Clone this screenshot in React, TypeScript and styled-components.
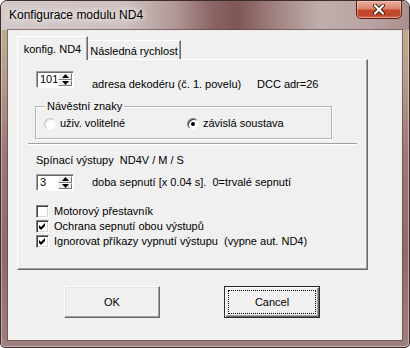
import styled, { createGlobalStyle } from 'styled-components';

const GlobalStyle = createGlobalStyle`
  body {
    margin: 0;
    background: #ffffff;
    font-family: "Liberation Sans", Arial, sans-serif;
    font-size: 11px;
    color: #000;
  }
`;

const Window = styled.div`
  width: 410px;
  height: 348px;
  box-sizing: border-box;
  display: flex;
  flex-direction: column;
  border: 1px solid #3c2c2c;
  border-radius: 7px 7px 5px 5px;
  overflow: hidden;
  background: linear-gradient(
    180deg,
    #c2b190 0px,
    #b8a48e 60px,
    #9d7a78 150px,
    #8e6a6a 250px,
    #a08080 348px
  );
  box-shadow: inset 0 0 0 1px rgba(255, 235, 235, 0.45);
`;

const TitleBar = styled.div`
  height: 29px;
  flex: none;
  display: flex;
  align-items: flex-start;
  padding-left: 8px;
  background: linear-gradient(
    90deg,
    #d3c9c8 0%,
    #cdc1c0 30%,
    #b39a99 42%,
    #8a6464 52%,
    #7e5656 58%,
    #9c7d7c 66%,
    #c0adac 78%,
    #b9a4a3 90%,
    #a98e8d 100%
  );
`;

const Title = styled.span`
  margin-top: 7px;
  font-size: 12px;
  line-height: 15px;
  text-shadow: 0 0 6px #fff, 0 0 10px rgba(255, 255, 255, 0.8);
`;

const CloseButton = styled.div`
  margin-left: auto;
  margin-right: 7px;
  margin-top: -1px;
  width: 46px;
  height: 19px;
  box-sizing: border-box;
  display: flex;
  align-items: center;
  justify-content: center;
  border: 1px solid #5a2016;
  border-radius: 0 0 5px 5px;
  background: linear-gradient(180deg, #eab0a2 0%, #d9846e 45%, #c5482a 55%, #c0482c 85%, #d9745a 100%);
  box-shadow: inset 0 0 0 1px rgba(255, 210, 200, 0.45);
`;

const Client = styled.div`
  flex: 1;
  margin: 0 7px 7px;
  background: #f0f0f0;
  display: flex;
  flex-direction: column;
  padding: 6px 0 0 9px;
  box-shadow: 0 0 0 1px rgba(90, 60, 60, 0.6);
`;

const TabRow = styled.div`
  display: flex;
  align-items: flex-end;
  height: 23px;
`;

const Tab = styled.div<{ $active?: boolean; $width: number }>`
  position: relative;
  z-index: 1;
  box-sizing: border-box;
  width: ${(p) => p.$width}px;
  height: ${(p) => (p.$active ? 24 : 19)}px;
  margin-bottom: ${(p) => (p.$active ? -1 : 0)}px;
  padding-top: ${(p) => (p.$active ? 6 : 4)}px;
  text-align: center;
  line-height: 13px;
  white-space: nowrap;
  background: #f0f0f0;
  border-top: 1px solid #fff;
  border-left: ${(p) => (p.$active ? '1px solid #fff' : 'none')};
  border-right: 1px solid #696969;
  box-shadow: inset -1px 0 0 #a0a0a0;
`;

const Panel = styled.div`
  width: 351px;
  height: 211px;
  box-sizing: border-box;
  border: 1px solid;
  border-color: #fff #696969 #696969 #fff;
  box-shadow: inset -1px -1px 0 #a0a0a0;
  display: flex;
  flex-direction: column;
`;

const Row = styled.div<{ $top: number }>`
  display: flex;
  align-items: flex-start;
  margin: ${(p) => p.$top}px 0 0 18px;
`;

const Spin = styled.div`
  width: 38px;
  height: 17px;
  box-sizing: border-box;
  display: flex;
  background: #fff;
  border: 1px solid;
  border-color: #a0a0a0 #fff #fff #a0a0a0;
  box-shadow: inset 1px 1px 0 #696969;
`;

const SpinValue = styled.span`
  flex: 1;
  padding: 1px 0 0 3px;
  line-height: 13px;
`;

const SpinButtons = styled.div`
  width: 14px;
  display: flex;
  flex-direction: column;
  margin: 1px 1px 1px 0;
`;

const SpinHalf = styled.div`
  flex: 1;
  display: flex;
  align-items: center;
  justify-content: center;
  background: #ececec;
  border: 1px solid;
  border-color: #fff #7a7a7a #7a7a7a #fff;
`;

const Label = styled.span<{ $offset: number; $gap: number; $width?: number }>`
  margin-top: ${(p) => p.$offset}px;
  margin-left: ${(p) => p.$gap}px;
  width: ${(p) => (p.$width ? `${p.$width}px` : 'auto')};
  line-height: 13px;
  white-space: pre;
`;

const GroupBox = styled.div`
  margin: 15px 0 0 17px;
  width: 297px;
  height: 33px;
  box-sizing: border-box;
  border: 1px solid #b4b4b4;
  box-shadow: 1px 1px 0 #fff, inset 1px 1px 0 #fff;
`;

const Legend = styled.span`
  display: block;
  width: fit-content;
  margin: -7px 0 0 9px;
  padding: 0 2px;
  background: #f0f0f0;
  line-height: 13px;
`;

const RadioRow = styled.div`
  display: flex;
  align-items: center;
  height: 13px;
  margin: 4px 0 0 8px;
`;

const RadioItem = styled.label<{ $width?: number }>`
  display: flex;
  align-items: center;
  width: ${(p) => (p.$width ? `${p.$width}px` : 'auto')};
  line-height: 13px;
`;

const RadioCircle = styled.span<{ $checked?: boolean }>`
  width: 12px;
  height: 12px;
  box-sizing: border-box;
  margin-right: 4px;
  border-radius: 50%;
  display: flex;
  align-items: center;
  justify-content: center;
  background: #fff;
  border: 1px solid;
  border-color: ${(p) => (p.$checked ? '#808080 #f4f4f4 #f4f4f4 #808080' : '#c4c4c4 #f8f8f8 #f8f8f8 #c4c4c4')};
  box-shadow: ${(p) => (p.$checked ? 'inset 1px 1px 0 #404040' : 'inset 1px 1px 0 #e0e0e0')};

  &::after {
    content: '';
    display: ${(p) => (p.$checked ? 'block' : 'none')};
    width: 4px;
    height: 4px;
    border-radius: 50%;
    background: #000;
  }
`;

const Separator = styled.div`
  margin: 4px 0 0 10px;
  width: 329px;
  height: 0;
  border-top: 1px solid #a0a0a0;
  border-bottom: 1px solid #fff;
`;

const Heading = styled.div`
  margin: 9px 0 0 18px;
  line-height: 13px;
  white-space: pre;
`;

const CheckList = styled.div`
  display: flex;
  flex-direction: column;
  margin: 13px 0 0 18px;
`;

const CheckRow = styled.label`
  display: flex;
  align-items: center;
  height: 15px;
  line-height: 13px;
  white-space: pre;
`;

const CheckBox = styled.span`
  width: 13px;
  height: 13px;
  box-sizing: border-box;
  margin-right: 5px;
  display: flex;
  align-items: center;
  justify-content: center;
  background: #fff;
  border: 1px solid;
  border-color: #808080 #fff #fff #808080;
  box-shadow: inset 1px 1px 0 #404040, inset -1px -1px 0 #d8d8d8;
`;

const ButtonRow = styled.div`
  display: flex;
  gap: 64px;
  margin: 16px 0 0 47px;
`;

const Button = styled.div<{ $default?: boolean }>`
  width: 96px;
  height: 32px;
  box-sizing: border-box;
  display: flex;
  align-items: stretch;
  background: #f0f0f0;
  border: 1px solid;
  border-color: ${(p) => (p.$default ? '#2a2a2a' : '#fff #696969 #696969 #fff')};
  box-shadow: ${(p) =>
    p.$default
      ? 'inset 1px 1px 0 #fff, inset -1px -1px 0 #696969, inset -2px -2px 0 #a0a0a0'
      : 'inset -1px -1px 0 #a0a0a0, inset 1px 1px 0 #e3e3e3'};
`;

const ButtonFace = styled.span<{ $focus?: boolean }>`
  flex: 1;
  display: flex;
  align-items: center;
  justify-content: center;
  margin: 3px;
  border: 1px dotted ${(p) => (p.$focus ? '#000' : 'transparent')};
  font-size: 11px;
`;

const Arrow = ({ down }: { down?: boolean }) => (
  <svg width="7" height="4" viewBox="0 0 7 4">
    <path d={down ? 'M0 0 H7 L3.5 4 Z' : 'M0 4 H7 L3.5 0 Z'} fill="#000" />
  </svg>
);

const SpinEdit = ({ value }: { value: string }) => (
  <Spin>
    <SpinValue>{value}</SpinValue>
    <SpinButtons>
      <SpinHalf>
        <Arrow />
      </SpinHalf>
      <SpinHalf>
        <Arrow down />
      </SpinHalf>
    </SpinButtons>
  </Spin>
);

const Check = ({ checked, children }: { checked?: boolean; children: string }) => (
  <CheckRow>
    <CheckBox>
      {checked && (
        <svg width="7" height="7" viewBox="0 0 7 7">
          <path d="M0 2 L2 4 L6 0 L6 3 L2 7 L0 5 Z" fill="#000" />
        </svg>
      )}
    </CheckBox>
    {children}
  </CheckRow>
);

const App = () => (
  <>
    <GlobalStyle />
    <Window>
      <TitleBar>
        <Title>Konfigurace modulu ND4</Title>
        <CloseButton>
          <svg width="12" height="11" viewBox="0 0 12 11">
            <path d="M2 1.5 L10 9.5 M10 1.5 L2 9.5" stroke="#4a1a12" strokeWidth="4" strokeLinecap="round" />
            <path d="M2 1.5 L10 9.5 M10 1.5 L2 9.5" stroke="#fff" strokeWidth="2.2" strokeLinecap="round" />
          </svg>
        </CloseButton>
      </TitleBar>
      <Client>
        <TabRow>
          <Tab $active $width={71}>
            konfig. ND4
          </Tab>
          <Tab $width={93}>Následná rychlost</Tab>
        </TabRow>
        <Panel>
          <Row $top={11}>
            <SpinEdit value="101" />
            <Label $offset={7} $gap={18} $width={165}>
              adresa dekodéru (č. 1. povelu)
            </Label>
            <Label $offset={7} $gap={0}>
              DCC adr=26
            </Label>
          </Row>
          <GroupBox>
            <Legend>Návěstní znaky</Legend>
            <RadioRow>
              <RadioItem $width={143}>
                <RadioCircle />
                uživ. volitelné
              </RadioItem>
              <RadioItem>
                <RadioCircle $checked />
                závislá soustava
              </RadioItem>
            </RadioRow>
          </GroupBox>
          <Separator />
          <Heading>Spínací výstupy  ND4V / M / S</Heading>
          <Row $top={7}>
            <SpinEdit value="3" />
            <Label $offset={2} $gap={18}>
              doba sepnutí [x 0.04 s].  0=trvalé sepnutí
            </Label>
          </Row>
          <CheckList>
            <Check>Motorový přestavník</Check>
            <Check checked>Ochrana sepnutí obou výstupů</Check>
            <Check checked>Ignorovat příkazy vypnutí výstupu  (vypne aut. ND4)</Check>
          </CheckList>
        </Panel>
        <ButtonRow>
          <Button>
            <ButtonFace>OK</ButtonFace>
          </Button>
          <Button $default>
            <ButtonFace $focus>Cancel</ButtonFace>
          </Button>
        </ButtonRow>
      </Client>
    </Window>
  </>
);

export default App;
